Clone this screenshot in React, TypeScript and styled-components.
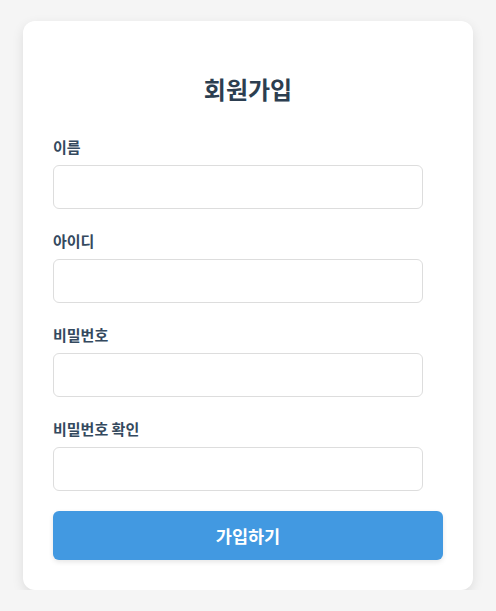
import React from "react";
import styled, { createGlobalStyle } from "styled-components";

const Global = createGlobalStyle`
  html, body { margin: 0; padding: 0; background: #f5f5f5; }
  body { font-family: "Noto Sans CJK KR", "Noto Sans", sans-serif; }
  * { box-sizing: border-box; }
`;

const Page = styled.div`
  display: flex;
  justify-content: center;
  padding-top: 21px;
`;

const Card = styled.form`
  width: 450px;
  background: #ffffff;
  border-radius: 12px;
  box-shadow: 0 4px 12px rgba(0, 0, 0, 0.1);
  padding: 30px;
  display: flex;
  flex-direction: column;
`;

const Title = styled.h2`
  margin: 21px 0 30px;
  text-align: center;
  font-size: 24px;
  line-height: 34px;
  font-weight: 700;
  color: #2c3e50;
`;

const Field = styled.div`
  display: flex;
  flex-direction: column;
  gap: 7px;
  margin-bottom: 21px;
`;

const Label = styled.label`
  font-size: 15px;
  line-height: 22px;
  font-weight: 700;
  color: #34495e;
`;

const Input = styled.input`
  width: 370px;
  height: 44px;
  border: 1px solid #dddddd;
  border-radius: 6px;
  padding: 0 12px;
  font-size: 15px;
  font-family: inherit;
  outline: none;
`;

const Submit = styled.button`
  margin-top: -1px;
  width: 100%;
  height: 49px;
  border: none;
  border-radius: 6px;
  background: #4299e1;
  color: #ffffff;
  font-family: inherit;
  font-size: 17.5px;
  font-weight: 700;
  box-shadow: 0 2px 5px rgba(0, 0, 0, 0.1);
  cursor: pointer;
`;

const fields = [
  { id: "name", label: "이름", type: "text" },
  { id: "userid", label: "아이디", type: "text" },
  { id: "pw", label: "비밀번호", type: "password" },
  { id: "pw2", label: "비밀번호 확인", type: "password" },
];

export default function App() {
  return (
    <>
      <Global />
      <Page>
        <Card onSubmit={(e) => e.preventDefault()}>
          <Title>회원가입</Title>
          {fields.map((f) => (
            <Field key={f.id}>
              <Label htmlFor={f.id}>{f.label}</Label>
              <Input id={f.id} type={f.type} />
            </Field>
          ))}
          <Submit type="submit">가입하기</Submit>
        </Card>
      </Page>
    </>
  );
}
